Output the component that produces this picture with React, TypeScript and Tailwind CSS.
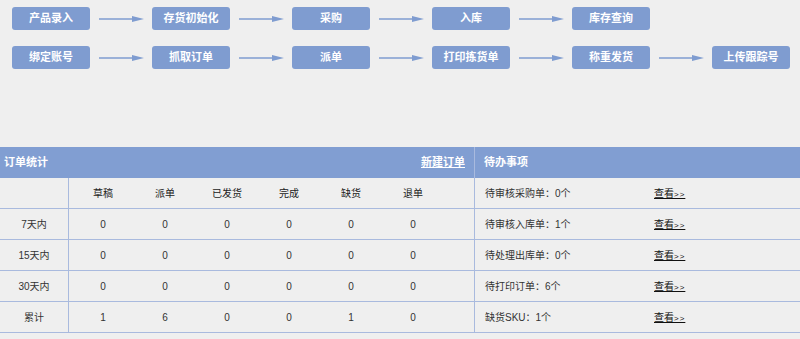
import React from "react";

// flow rows on top
const flowRows: string[][] = [
  ["产品录入", "存货初始化", "采购", "入库", "库存查询"],
  ["绑定账号", "抓取订单", "派单", "打印拣货单", "称重发货", "上传跟踪号"],
];

const cols = ["草稿", "派单", "已发货", "完成", "缺货", "退单"];

const stats: { label: string; values: number[] }[] = [
  { label: "7天内", values: [0, 0, 0, 0, 0, 0] },
  { label: "15天内", values: [0, 0, 0, 0, 0, 0] },
  { label: "30天内", values: [0, 0, 0, 0, 0, 0] },
  { label: "累计", values: [1, 6, 0, 0, 1, 0] },
];

const todos = [
  "待审核采购单：0个",
  "待审核入库单：1个",
  "待处理出库单：0个",
  "待打印订单：6个",
  "缺货SKU：1个",
];

function Arrow() {
  return (
    <div className="flex w-[62px] items-center pl-[9px]">
      <svg width="46" height="8" viewBox="0 0 46 8">
        <line x1="0" y1="4" x2="34" y2="4" stroke="#7f9cd0" strokeWidth="1.6" />
        <polygon points="33,1 45,4 33,7" fill="#7f9cd0" />
      </svg>
    </div>
  );
}

function FlowButton({ text }: { text: string }) {
  return (
    <div className="flex h-[23px] w-[78px] items-center justify-center rounded-[3px] bg-[#7f9cd0] text-[11px] font-bold text-white">
      {text}
    </div>
  );
}

export default function App() {
  return (
    <div
      className="h-[339px] w-[800px] overflow-hidden bg-[#efefef] text-[10px] text-[#333]"
      style={{ fontFamily: '"Liberation Sans", "Noto Sans CJK SC", sans-serif' }}
    >
      {/* process flow */}
      <div className="flex flex-col gap-[16px] pl-[12px] pt-[7px]">
        {flowRows.map((row, i) => (
          <div key={i} className="flex">
            {row.map((t, j) => (
              <React.Fragment key={t}>
                {j > 0 && <Arrow />}
                <FlowButton text={t} />
              </React.Fragment>
            ))}
          </div>
        ))}
      </div>

      {/* stats + todo */}
      <div className="mt-[78px] flex">
        <div className="w-[475px] border-r border-[#a9bade]">
          <div className="flex h-[31px] items-center justify-between bg-[#819ed2] pl-[4px] pr-[9px] text-[11px] font-bold text-white">
            <span>订单统计</span>
            <span className="underline">新建订单</span>
          </div>
          <div className="flex h-[31px] items-center border-b border-[#a9bade] text-[#222]">
            <div className="h-full w-[69px] border-r border-[#a9bade]" />
            <div className="flex pl-[3px]">
              {cols.map((c) => (
                <div key={c} className="w-[62px] text-center">
                  {c}
                </div>
              ))}
            </div>
          </div>
          {stats.map((r) => (
            <div key={r.label} className="flex h-[31px] items-center border-b border-[#a9bade]">
              <div className="flex h-full w-[69px] items-center justify-center border-r border-[#a9bade]">
                {r.label}
              </div>
              <div className="flex pl-[3px]">
                {r.values.map((v, k) => (
                  <div key={k} className="w-[62px] text-center">
                    {v}
                  </div>
                ))}
              </div>
            </div>
          ))}
        </div>

        <div className="flex-1">
          <div className="flex h-[31px] items-center bg-[#819ed2] pl-[9px] text-[11px] font-bold text-white">
            待办事项
          </div>
          {todos.map((t) => (
            <div key={t} className="flex h-[31px] items-center border-b border-[#a9bade] pl-[10px]">
              <span className="w-[169px]">{t}</span>
              <span className="text-[#111] underline">
                查看<span className="text-[8px] tracking-[1px]">&gt;&gt;</span>
              </span>
            </div>
          ))}
        </div>
      </div>
    </div>
  );
}
